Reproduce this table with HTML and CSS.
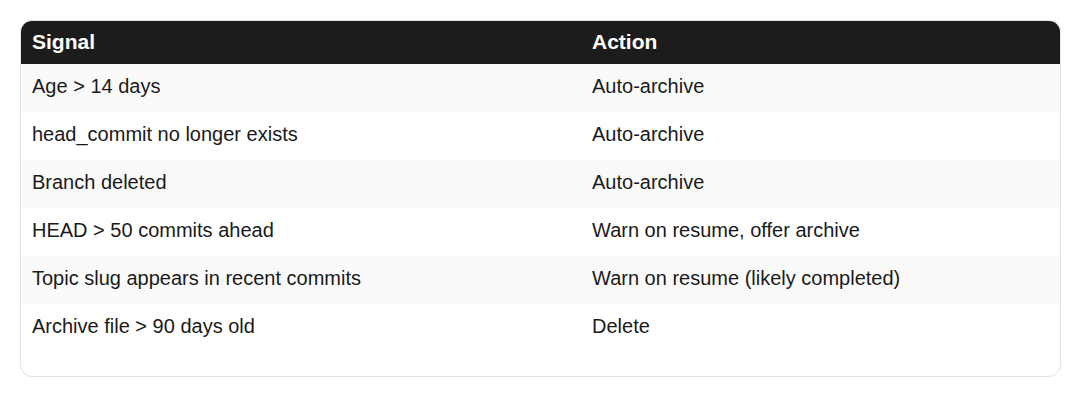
FILE: index.html
```html
<!DOCTYPE html>
<html lang="en">
<head>
  <meta charset="UTF-8" />
  <title>Stale signals</title>
  <link rel="stylesheet" href="styles.css">
</head>
<body>
  <div class="card">
    <table class="rules">
      <thead>
        <tr><th class="col-signal">Signal</th><th>Action</th></tr>
      </thead>
      <tbody>
        <tr><td>Age &gt; 14 days</td><td>Auto-archive</td></tr>
        <tr><td>head_commit no longer exists</td><td>Auto-archive</td></tr>
        <tr><td>Branch deleted</td><td>Auto-archive</td></tr>
        <tr><td>HEAD &gt; 50 commits ahead</td><td>Warn on resume, offer archive</td></tr>
        <tr><td>Topic slug appears in recent commits</td><td>Warn on resume (likely completed)</td></tr>
        <tr><td>Archive file &gt; 90 days old</td><td>Delete</td></tr>
      </tbody>
    </table>
  </div>
</body>
</html>
```

FILE: styles.css
```css
*,*::before,*::after{box-sizing:border-box;margin:0;padding:0}
body{font-family:'Liberation Sans',Arial,sans-serif;background:#fff;color:#1a1a1a;padding:20px 19px 20px 20px}

.card{border:1px solid #e2e2e2;border-radius:12px;overflow:hidden;padding-bottom:24px}
.rules{width:100%;border-collapse:collapse}
.rules th{background:#1c1c1c;color:#fff;font-size:21px;font-weight:700;text-align:left;padding:0 11px 2px;height:43px}
.rules .col-signal{width:560px}
.rules td{font-size:20px;padding:0 11px 4px;height:48px;line-height:24px}
.rules tbody tr:nth-child(odd) td{background:#fafafa}
```
